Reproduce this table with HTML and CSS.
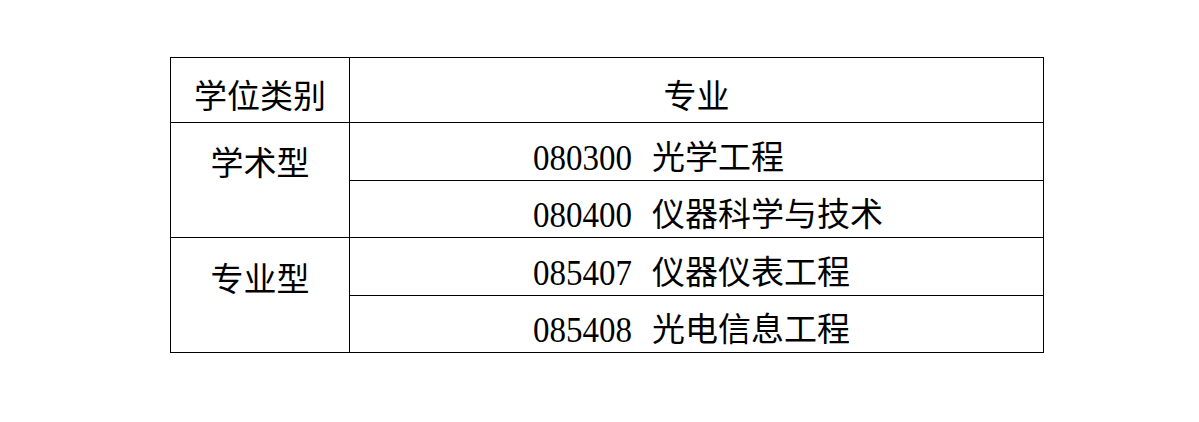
FILE: index.html
```html
<!DOCTYPE html>
<html lang="zh">
<head>
<meta charset="utf-8">
<link rel="stylesheet" href="styles.css">
</head>
<body>
<div class="tbl">
  <div class="c h1">学位类别</div>
  <div class="c h2">专业</div>
  <div class="c t1 r23">学术型</div>
  <div class="c m r17"><span class="code">080300</span><span class="zh">光学工程</span></div>
  <div class="c m r16"><span class="code">080400</span><span class="zh">仪器科学与技术</span></div>
  <div class="c t1 r24">专业型</div>
  <div class="c m r17"><span class="code">085407</span><span class="zh">仪器仪表工程</span></div>
  <div class="c m r16"><span class="code">085408</span><span class="zh">光电信息工程</span></div>
</div>
</body>
</html>
```
FILE: styles.css
```css
html, body { margin: 0; padding: 0; background: #fff; }
body { color: #000; font-family: "Liberation Serif", "Noto Sans CJK SC", serif; font-size: 33px; line-height: 33px; }
.tbl {
  margin: 57px 0 0 170px;
  width: 874px;
  display: grid;
  grid-template-columns: 179px 694px;
  grid-template-rows: 65px 58px 57px 58px 57px;
  border-left: 1px solid #000;
  border-top: 1px solid #000;
  box-sizing: border-box;
}
.c {
  border-right: 1px solid #000;
  border-bottom: 1px solid #000;
  box-sizing: border-box;
  white-space: nowrap;
}
.h1, .h2, .t1 { font-family: "Noto Sans CJK SC", sans-serif; text-align: center; }
.h1, .h2 { padding-top: 20px; }
.t1 { grid-row: span 2; }
.r23 { padding-top: 22px; }
.r24 { padding-top: 23px; }
.m { padding-left: 183px; }
.r17 { padding-top: 16px; }
.r16 { padding-top: 15px; }
.code { font-family: "Liberation Serif", serif; transform: scaleY(1.08); display: inline-block; }
.zh { font-family: "Noto Sans CJK SC", sans-serif; margin-left: 20px; }
```
